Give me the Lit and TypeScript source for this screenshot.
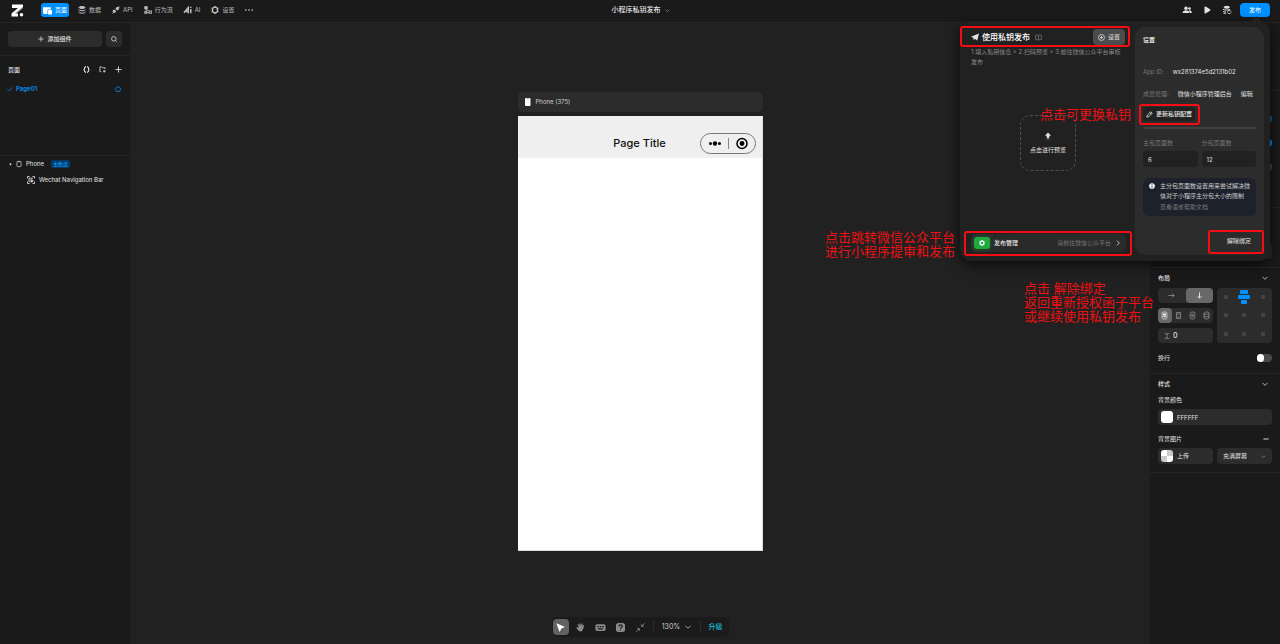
import { LitElement, html, svg, css, nothing } from "lit";
import { customElement, property } from "lit/decorators.js";
import { classMap } from "lit/directives/class-map.js";

/* Every icon is drawn on a 16 x 16 grid. */
const ICONS: Record<string, unknown> = {
  pages: svg`<path fill="currentColor" d="M0 2h14v4H8v8H2a2 2 0 0 1-2-2z"/><rect x="9" y="7" width="7" height="8" rx="1" fill="currentColor"/>`,
  data: svg`<g fill="none" stroke="currentColor" stroke-width="2"><ellipse cx="8" cy="3" rx="6" ry="2" fill="currentColor"/><path d="M1 7.500c1 2.600 13 2.600 14 0M1 12c1 3.200 13 3.200 14 0"/></g>`,
  api: svg`<path fill="currentColor" d="M8 3l6-2 1 1-2 6-3 1-3-3zM2 8l3-1 3 3-1 3-3 1-3-3z"/><path d="M5 11l-4 4" stroke="currentColor" stroke-width="2"/>`,
  flow: svg`<g fill="none" stroke="currentColor" stroke-width="1.800"><rect x="1.500" y="1.500" width="5" height="4" fill="currentColor"/><path d="M4 5v8.500h6M4 7l6 3"/><rect x="1.500" y="11.500" width="4" height="3"/><rect x="10.500" y="10" width="4.500" height="4.500"/></g>`,
  ai: svg`<path d="M0 13.500L8.500 3v11.500M4 11h5" fill="none" stroke="currentColor" stroke-width="3"/><path d="M13.500 6v8.500M13.500 1.500v2.500" stroke="currentColor" stroke-width="3"/>`,
  gear: svg`<path fill="none" stroke="currentColor" stroke-width="3" stroke-linejoin="round" d="M6 2.500h4l3 2.500v6L10 13.500H6L3 11V5z"/><path d="M8 0v3M8 13v3M1 4l2 1M13 11l2 1M1 12l2-1M13 5l2-1" stroke="currentColor" stroke-width="2"/>`,
  dots: svg`<g fill="currentColor"><circle cx="1.500" cy="8" r="1.700"/><circle cx="8" cy="8" r="1.700"/><circle cx="14.500" cy="8" r="1.700"/></g>`,
  plus: svg`<path d="M8 1v14M1 8h14" stroke="currentColor" stroke-width="2"/>`,
  minus: svg`<path d="M1 8h14" stroke="currentColor" stroke-width="2.500"/>`,
  search: svg`<g fill="none" stroke="currentColor" stroke-width="2"><circle cx="7.500" cy="7.500" r="6"/><path d="M12 12l3.500 3.500"/></g>`,
  braces: svg`<path fill="none" stroke="currentColor" stroke-width="2.400" d="M7 2H5.500L3.500 4v2.500L2 8l1.500 1.500V12l2 2H7M9 2h1.500l2 2v2.500L14 8l-1.500 1.500V12l-2 2H9"/>`,
  folder: svg`<path fill="none" stroke="currentColor" stroke-width="1.800" d="M5 13H2V2h4l2 2h6v3"/><path d="M12 9v6M9 12h6" stroke="currentColor" stroke-width="1.800"/>`,
  check: svg`<path fill="none" stroke="currentColor" stroke-width="2" d="M1 8l4.500 4.500L15 4"/>`,
  home: svg`<path fill="none" stroke="currentColor" stroke-width="2.200" stroke-linejoin="round" d="M8 1L1 6.500 3.500 14.500h9l2.500-8z"/>`,
  tri: svg`<path fill="currentColor" d="M1 3h14l-7 11z"/>`,
  device: svg`<g fill="none" stroke="currentColor" stroke-width="1.800"><rect x="2.500" y="1" width="11" height="14" rx="2"/><path d="M5.500 2h5"/></g>`,
  deviceFill: svg`<rect x="2" y="0" width="11" height="16" rx="2" fill="#fff"/><path d="M5.500 1.500h4" stroke="#777" stroke-width="1.500"/>`,
  component: svg`<g fill="none" stroke="currentColor" stroke-width="1.700"><path d="M1 5V1h4M11 1h4v4M15 11v4h-4M5 15H1v-4M4 4.500h8M4 4.500v7h3"/><path fill="currentColor" d="M7.500 7.500l5 2-2 1-1 2z"/></g>`,
  chev: svg`<path fill="none" stroke="currentColor" stroke-width="2" d="M1.500 5L8 11.500 14.500 5"/>`,
  chevR: svg`<path fill="none" stroke="currentColor" stroke-width="2" d="M5 1.500L11.500 8 5 14.500"/>`,
  users: svg`<g fill="currentColor"><circle cx="6" cy="4.500" r="3.400"/><path d="M-1 14C-1 6.500 13 6.500 13 14z"/><circle cx="13" cy="5" r="2.600"/><path d="M11.500 8.500c4-1 6 1.500 6 5.500h-3.500z"/></g>`,
  play: svg`<path fill="currentColor" d="M3 3q0-3 3-1.500l8 5q2 1.500 0 3l-8 5Q3 16 3 13z"/>`,
  sync: svg`<g fill="none" stroke="currentColor" stroke-width="2"><ellipse cx="7.500" cy="2.500" rx="5.500" ry="1.800" fill="currentColor"/><path d="M0 6.500c2 2.200 12 2.200 14 0M0 10.500c1 1.200 4 1.300 6 1.300M1 14.500h5"/><path stroke-width="1.900" d="M9 11c1-3 6-3 7 0M16 13c-1 3-6 3-7 0"/></g>`,
  plane: svg`<path fill="currentColor" d="M0 7.500L16 1l-3.500 14-5-3.500-2.500 3.500V10z"/>`,
  book: svg`<path fill="none" stroke="currentColor" stroke-width="1.700" d="M8 3v11M8 3.500C6 2 3 2 1.500 2.500V13c2-.5 5-.5 6.500 1 1.500-1.500 4.500-1.500 6.500-1V2.500C13 2 10 2 8 3.500z"/>`,
  target: svg`<g fill="none" stroke="currentColor" stroke-width="1.700"><circle cx="8" cy="8" r="6.800"/><path d="M8 4.500v7M4.500 8h7"/></g>`,
  upload: svg`<path fill="currentColor" d="M8 1l6 6.500h-3.500V12h-5V7.500H2z"/><path d="M5.500 14h5" stroke="currentColor" stroke-width="2" opacity=".6"/>`,
  hex: svg`<path fill="none" stroke="currentColor" stroke-width="3.500" stroke-linejoin="round" d="M8 2l5 3v6l-5 3-5-3V5z"/>`,
  pencil: svg`<path fill="none" stroke="currentColor" stroke-width="1.900" stroke-linejoin="round" d="M2 14l1-4.500L11 1.800l3.200 3.200L6.500 13zM9 4l3 3"/>`,
  info: svg`<circle cx="8" cy="8" r="7.500" fill="#fff"/><path d="M8 3v2.500M8 7v6" stroke="#1d212c" stroke-width="2.400"/>`,
  right: svg`<path fill="none" stroke="currentColor" stroke-width="1.700" d="M1 8h13M9.500 3.500L14 8l-4.500 4.500"/>`,
  down: svg`<path fill="none" stroke="currentColor" stroke-width="2" d="M8 1v13M3.500 9.500L8 14l4.500-4.500"/>`,
  packStart: svg`<g fill="none" stroke="currentColor" stroke-width="1.600"><rect x="2.500" y="0" width="11" height="16" rx="3"/><path fill="currentColor" d="M5.500 4h5v3h-5zM5.500 9h5v2h-5z"/></g>`,
  packEnds: svg`<g fill="none" stroke="currentColor" stroke-width="1.600"><path d="M3 4V1h10v3M3 12v3h10v-3"/><rect x="3.500" y="4.500" width="9" height="7"/></g>`,
  packMid: svg`<g fill="none" stroke="currentColor" stroke-width="1.600"><rect x="2.500" y="0" width="11" height="16" rx="4"/><path d="M5 5h6M5 8h6M5 11h6"/></g>`,
  packEven: svg`<g fill="none" stroke="currentColor" stroke-width="1.600"><rect x="2.500" y="0" width="11" height="16" rx="4"/><path d="M1 5h14M1 11h14"/></g>`,
  gap: svg`<path fill="none" stroke="currentColor" stroke-width="1.700" d="M1 1.500h14M1 14.500h14M8 3v10M5.500 5L8 3l2.500 2M5.500 11L8 13l2.500-2"/>`,
  cursor: svg`<path fill="currentColor" d="M1 1.500Q1 .5 2 1l13 5.500q.8.500 0 1L9.500 9.800 7 15q-.5.800-1 0z"/>`,
  hand: svg`<path fill="currentColor" d="M5 8L3 3q0-1.500 1.500-1L6 5.500 6 1q1-1.300 2 0l.5 4L10 1q1.200-.8 1.800.4L11.300 6 13.500 3.500q1.300-.3 1.300 1L12.500 10.500Q11.500 15 8 15 5 15 3 12L.5 8.500Q1 7 2.500 7.500z"/>`,
  keyboard: svg`<rect x="-1" y="2" width="18" height="12" rx="3" fill="currentColor"/><path d="M2 6.500h3M6.500 6.500h3M11 6.500h3M3.500 10.500h9" stroke="#1d1d1d" stroke-width="2"/>`,
  help: svg`<rect x="0" y="0" width="16" height="16" rx="4.500" fill="currentColor"/><path fill="none" stroke="#1d1d1d" stroke-width="2.300" d="M5 6c0-3.500 6-3.500 6 0 0 2-3 1.800-3 4M8 11.500v2"/>`,
  shrink: svg`<path fill="none" stroke="currentColor" stroke-width="1.500" d="M15.500.5L10 6M10 2v4h4M.5 15.500L6 10M2 10h4v4"/>`,
};

@customElement("ui-icon")
class UiIcon extends LitElement {
  static styles = css`
    :host { display: inline-flex; flex: none; width: 8px; height: 8px; }
    svg { width: 100%; height: 100%; display: block; overflow: visible; }
  `;
  @property() name = "";
  render() {
    return html`<svg viewBox="0 0 16 16" aria-hidden="true">${ICONS[this.name] ?? nothing}</svg>`;
  }
}

const NAV = [
  { icon: "pages", label: "页面", active: true },
  { icon: "data", label: "数据" },
  { icon: "api", label: "API" },
  { icon: "flow", label: "行为流" },
  { icon: "ai", label: "AI" },
  { icon: "gear", label: "设置" },
];

@customElement("app-root")
class AppRoot extends LitElement {
  static styles = css`
    :host {
      display: block;
      font: 6px/10px Inter, "Noto Sans CJK SC", sans-serif;
      color: #e4e4e4;
      background: #212121;
    }
    *, *::before { box-sizing: border-box; }
    button, input, select {
      font: inherit; color: inherit; border: 0; padding: 0; margin: 0;
      background: none; appearance: none; outline: none; min-width: 0;
    }
    button { display: flex; align-items: center; justify-content: center; gap: 3px; white-space: nowrap; }
    p, h1, h2, h3, ul { margin: 0; padding: 0; font: inherit; }
    a { color: inherit; text-decoration: none; }
    .app { position: relative; display: grid; grid-template-rows: 23px 1fr; min-height: 100vh; overflow: hidden; }

    .top {
      display: grid; grid-template-columns: 1fr auto 1fr; align-items: center;
      background: #1a1a1a; border-bottom: 1px solid #262626; padding: 0 10px 2px 11px;
    }
    .left { display: flex; align-items: center; gap: 17px; }
    .logo { width: 13px; height: 13px; }
    nav { display: flex; align-items: center; gap: 5px; }
    .tab { height: 14px; padding: 0 3px; border-radius: 3px; color: #bdbdbd; }
    .tab.active { background: #0091ff; color: #fff; padding: 0 2px; margin-right: 1px; }
    .tab.active ui-icon { width: 9px; height: 9px; }
    .project { font-size: 7px; font-weight: 500; gap: 4px; }
    .project ui-icon { width: 5px; height: 5px; color: #999; }
    .actions { display: flex; align-items: center; justify-content: flex-end; gap: 12px; }
    .publish { width: 30px; height: 14px; background: #0091ff; color: #fff; border-radius: 4px; margin-left: -3px; }

    .body { display: grid; grid-template-columns: 130px 1fr 130px; min-height: 0; }
    .side { background: #1a1a1a; }
    .tools { display: flex; gap: 4px; padding: 8px; border-bottom: 1px solid #262626; }
    .tools button { height: 16px; background: #2c2c2c; border-radius: 4px; font-weight: 500; }
    .tools .add { flex: 1; }
    .tools .find { width: 16px; }
    .tools ui-icon { width: 6px; height: 6px; }
    .pages { height: 100px; padding: 4px 8px; border-bottom: 1px solid #262626; }
    .row { display: flex; align-items: center; height: 19px; }
    .row .grow { flex: 1; }
    .head { gap: 9px; }
    .head ui-icon { width: 7px; height: 7px; }
    .head h2 { font-weight: 500; }
    .page { color: #0585e8; gap: 3px; font-weight: 700; padding-right: 1px; }
    .page ui-icon { width: 6px; height: 6px; margin-left: -1px; }
    .node { height: 16px; padding-left: 9px; gap: 4px; font-size: 6px; }
    .node ui-icon { width: 6px; height: 6px; }
    .node ui-icon.caret { width: 3px; height: 3px; }
    .node ui-icon.comp { width: 8px; height: 8px; }
    .node.child { padding-left: 27px; }
    .tag { background: #053a66; color: #079bff; border-radius: 2px; height: 8px; line-height: 8px; padding: 0 2px; font-size: 5px; font-weight: 500; margin-left: 3px; }

    .canvas { display: flex; flex-direction: column; align-items: center; padding: 69px 0 7px; }
    .device { width: 245px; display: flex; flex-direction: column; gap: 4px; }
    .label { height: 20px; display: flex; align-items: center; gap: 4px; padding: 0 6px; background: #2c2c2c; border-radius: 5px; color: #cfcfcf; }
    .screen { height: 435px; background: #fff; color: #111; border: solid #ddd; border-width: 0 1px 1px 0; }
    .navbar { height: 42px; background: #efefef; display: grid; grid-template-columns: 1fr auto 1fr; align-items: end; padding: 0 6px 4px; }
    .navbar h3 { font-size: 11px; line-height: 22px; font-weight: 500; }
    .capsule { justify-self: end; width: 56px; height: 21px; border: 1px solid #777; border-radius: 11px; display: flex; align-items: center; justify-content: center; }
    .capsule svg { width: 54px; height: 19px; }
    .dock { margin-top: auto; height: 20px; display: flex; align-items: center; background: #1b1b1b; border-radius: 5px; padding: 0 2px 0 1px; gap: 4px; color: #8b8b8b; }
    .dock button { width: 16px; height: 16px; border-radius: 4px; }
    .dock ui-icon { width: 9px; height: 9px; }
    .dock .on { background: #626262; color: #fff; }
    .dock .zoom { width: 38px; padding: 0 4px; border-radius: 0; color: #cfcfcf; font-size: 7px; gap: 5px; }
    .dock .zoom ui-icon { width: 6px; height: 6px; }
    .dock .up { width: 22px; color: #17b9d0; font-size: 7px; font-weight: 500; }
    .dock i { width: 1px; height: 12px; background: #2b2b2b; }

    .props { background: #1a1a1a; }
    .blank { border-bottom: 1px solid #262626; height: 68px; }
    .blank.mid { height: 117px; display: grid; gap: 16px; align-content: start; justify-items: end; padding: 24px 8px 0; }
    .blank.low { height: 60px; display: grid; align-content: end; padding: 0 8px 8px; }
    .group { padding: 0 8px; border-bottom: 1px solid #262626; }
    .group .row { height: 20px; justify-content: space-between; }
    .group .title { font-weight: 500; padding-right: 4px; }
    .title ui-icon { width: 6px; height: 6px; }
    .layout { display: grid; grid-template-columns: 1fr 1fr; gap: 4px; }
    .stack { display: grid; gap: 5px; }
    .seg { display: flex; height: 15px; background: #2c2c2c; border-radius: 4px; color: #9b9b9b; padding: 0; }
    .seg button { flex: 1; border-radius: 4px; }
    .seg ui-icon { width: 7px; height: 7px; }
    .seg .on { background: #686868; color: #eee; }
    .field { display: flex; align-items: center; gap: 4px; height: 16px; background: #2c2c2c; border-radius: 4px; padding: 0 3px; }
    .field input { flex: 1; width: 0; height: 100%; }
    .num { height: 15px; padding: 0 6px; gap: 3px; }
    .num input { font-size: 7px; font-weight: 500; }
    .num ui-icon { width: 6px; height: 6px; color: #8b8b8b; }
    .grid9 { background: #2c2c2c; border-radius: 4px; display: grid; grid-template: repeat(3, minmax(0, 1fr)) / repeat(3, 1fr); place-items: center; }
    .grid9 i { width: 4px; height: 4px; background: #444; border-radius: 1px; }
    .grid9 svg { width: 12px; height: 14px; }
    .group .wrap { height: 30px; }
    .switch { width: 15px; height: 8px; border-radius: 4px; background: #4a4a4a; justify-content: flex-start; }
    .switch::before { content: ""; width: 7px; height: 8px; border-radius: 4px; background: #fff; }
    .switch.lit { background: #0091ff; }
    .switch.faded { opacity: 0.6; }
    .swatch { width: 12px; height: 12px; border-radius: 3px; background: #fff; flex: none; }
    .checker { background: repeating-conic-gradient(#ccc 0 25%, #fff 0 50%); }
    .style { padding-bottom: 8px; }
    .sub ui-icon { width: 6px; height: 6px; margin-right: 3px; }
    .group .sub { height: 12px; margin-bottom: 3px; }
    .group .gapped { margin: 6px 0 1px; height: 16px; }
    .field.select { padding: 0 6px; gap: 0; }
    .select select { flex: 1; width: 0; }
    .select ui-icon { width: 5px; height: 5px; color: #999; }
    button.field { justify-content: flex-start; }

    /* publish pop-over, anchored beneath the publish button */
    .pop {
      position: absolute; top: 21px; right: 10px; width: 310px; height: 240px; z-index: 2;
      display: grid; grid-template-columns: 1fr 129px; padding: 6px 6px 6px 0;
      background: #212121; border-radius: 12px; box-shadow: 0 4px 14px #000a;
    }
    .pop::before { content: ""; position: absolute; right: 9px; top: -3px; width: 9px; height: 9px; background: #212121; transform: rotate(45deg); z-index: -1; }
    .main { display: flex; flex-direction: column; padding: 2px 10px 3px 11px; }
    .mhead { display: flex; align-items: center; height: 16px; gap: 3px; }
    .mhead h2 { font-size: 8px; font-weight: 500; color: #fff; }
    .mhead .bk { width: 7px; height: 7px; color: #777; margin-left: 2px; flex: none; }
    .mhead button { margin-left: auto; width: 32px; height: 16px; background: #4b4b4b; border-radius: 4px; }
    .mhead button ui-icon { width: 7px; height: 7px; }
    .steps { color: #8a8a8a; margin-top: 2px; line-height: 10px; }
    .preview { align-self: center; margin: 48px 0 0; flex-direction: column; gap: 5px; width: 56px; height: 56px; border: 1px dashed #505050; border-radius: 10px; }
    .manage { margin: auto -1px 0 0; display: flex; align-items: center; height: 18px; background: #2a2a2a; border-radius: 5px; padding: 0 5px 0 3px; font-weight: 500; gap: 4px; }
    .badge { width: 16px; height: 12px; border-radius: 3px; background: #20aa3e; display: grid; place-items: center; box-shadow: 0 0 6px #20aa3e66; }
    .badge ui-icon { width: 6px; height: 6px; color: #fff; }
    .manage .goto { margin-left: auto; color: #777; font-weight: 400; }
    .manage .go { width: 6px; height: 6px; }
    .setup { background: #2c2c2c; border-radius: 11px; padding: 8px; display: flex; flex-direction: column; }
    .setup h2 { font-weight: 600; }
    .pair { display: flex; height: 10px; gap: 9px; }
    .dim { color: #777; }
    .appid { margin-top: 22px; }
    .member { margin-top: 12px; }
    .key { align-self: flex-start; width: 52px; height: 14px; margin-top: 8px; background: #212121; border-radius: 4px; font-weight: 500; }
    .key ui-icon { width: 7px; height: 7px; }
    .setup hr { width: 100%; height: 2px; margin: 6px 0 9px; border: 0; background: #424242; border-radius: 1px; }
    .counts { display: grid; grid-template-columns: 1fr 1fr; gap: 4px; }
    .counts label { display: grid; gap: 3px; color: #777; }
    .counts input { height: 16px; width: 100%; background: #212121; border-radius: 4px; padding: 0 5px; color: #e4e4e4; }
    .note { display: grid; grid-template-columns: auto 1fr; gap: 5px; margin-top: 11px; padding: 3px 4px 4px 6px; background: #1d212c; border-radius: 6px; color: #cfcfcf; white-space: nowrap; }
    .note ui-icon { width: 6px; height: 6px; margin-top: 2px; }
    .note a { display: block; color: #777; margin-top: 1px; }
    .unbind { align-self: flex-end; margin: auto 5px 0 0; height: 12px; }

    /* review marks floating over the page */
    .mark { position: absolute; z-index: 3; border: 2px solid #f40d12; border-radius: 3px; pointer-events: none; }
    .m1 { top: 26px; right: 150px; width: 170px; height: 21px; }
    .m2 { top: 231px; right: 148px; width: 168px; height: 25px; }
    .m3 { top: 104px; right: 80px; width: 61px; height: 21px; }
    .m4 { top: 230px; right: 16px; width: 56px; height: 24px; }
    .memo { position: absolute; z-index: 3; color: #ed1014; font-size: 13px; line-height: 14px; pointer-events: none; }
    .n1 { top: 107px; right: 149px; }
    .n2 { top: 230px; right: 325px; }
    .n3 { top: 281px; right: 126px; }
  `;

  render() {
    return html`<div class="app">
      ${this.header()}
      <div class="body">${this.pagePanel()}${this.canvas()}${this.inspector()}</div>
      ${this.publishPopover()} ${this.marks()}
    </div>`;
  }

  private header() {
    return html`<header class="top">
      <div class="left">
        <svg class="logo" viewBox="0 0 26 26" aria-hidden="true">
          <path d="M2 1H24V7L10 19H14V25H1V19L14 8H2Z" fill="#fff" />
          <path d="M24 5v3L12 18l-5 2z" fill="#999" />
          <circle cx="21" cy="21.500" r="3.500" fill="#fff" />
        </svg>
        <nav>
          ${NAV.map(
            (n) => html`<button class=${classMap({ tab: true, active: !!n.active })}>
              <ui-icon name=${n.icon}></ui-icon>${n.label}
            </button>`
          )}
          <button class="tab" aria-label="更多"><ui-icon name="dots"></ui-icon></button>
        </nav>
      </div>
      <button class="project">小程序私钥发布<ui-icon name="chev"></ui-icon></button>
      <div class="actions">
        <button aria-label="成员"><ui-icon name="users"></ui-icon></button>
        <button aria-label="预览"><ui-icon name="play"></ui-icon></button>
        <button aria-label="同步"><ui-icon name="sync"></ui-icon></button>
        <button class="publish">发布</button>
      </div>
    </header>`;
  }

  private pagePanel() {
    return html`<aside class="side">
      <div class="tools">
        <button class="add"><ui-icon name="plus"></ui-icon>添加组件</button>
        <button class="find" aria-label="搜索"><ui-icon name="search"></ui-icon></button>
      </div>
      <section class="pages">
        <div class="row head">
          <h2 class="grow">页面</h2>
          <button aria-label="变量"><ui-icon name="braces"></ui-icon></button>
          <button aria-label="新建文件夹"><ui-icon name="folder"></ui-icon></button>
          <button aria-label="新建页面"><ui-icon name="plus"></ui-icon></button>
        </div>
        <div class="row page">
          <ui-icon name="check"></ui-icon><span class="grow">Page01</span><ui-icon name="home"></ui-icon>
        </div>
      </section>
      <div class="row node">
        <ui-icon class="caret" name="tri"></ui-icon><ui-icon name="device"></ui-icon>Phone<span class="tag">主断点</span>
      </div>
      <div class="row node child"><ui-icon class="comp" name="component"></ui-icon>Wechat Navigation Bar</div>
    </aside>`;
  }

  private canvas() {
    return html`<main class="canvas">
      <div class="device">
        <div class="label"><ui-icon name="deviceFill"></ui-icon>Phone (375)</div>
        <div class="screen">
          <div class="navbar">
            <span></span>
            <h3>Page Title</h3>
            <div class="capsule">
              <svg viewBox="0 0 54 19" aria-hidden="true">
                <circle cx="9.500" cy="9.500" r="1.500" /><circle cx="14" cy="9.500" r="2.200" /><circle cx="18.500" cy="9.500" r="1.500" />
                <path d="M27.500 4v11" stroke="#888" />
                <circle cx="41" cy="9.500" r="5" fill="none" stroke="#000" stroke-width="1.500" /><circle cx="41" cy="9.500" r="2.400" />
              </svg>
            </div>
          </div>
        </div>
      </div>
      <div class="dock">
        <button class="on" aria-label="选择"><ui-icon name="cursor"></ui-icon></button>
        <button aria-label="拖动"><ui-icon name="hand"></ui-icon></button>
        <button aria-label="快捷键"><ui-icon name="keyboard"></ui-icon></button>
        <button aria-label="帮助"><ui-icon name="help"></ui-icon></button>
        <button aria-label="收起"><ui-icon name="shrink"></ui-icon></button>
        <i></i>
        <button class="zoom">130%<ui-icon name="chev"></ui-icon></button>
        <i></i>
        <button class="up">升级</button>
      </div>
    </main>`;
  }

  private inspector() {
    return html`<aside class="props">
      <div class="blank"></div>
      <div class="blank mid">
        <button class="switch lit faded" role="switch" aria-checked="true" aria-label="显示"></button>
        <button class="switch lit" role="switch" aria-checked="true" aria-label="启用"></button>
        <button class="switch" role="switch" aria-checked="false" aria-label="固定"></button>
      </div>
      <div class="blank low"><span class="field"></span></div>
      <section class="group">
        <div class="row title">布局<ui-icon name="chev"></ui-icon></div>
        <div class="layout">
          <div class="stack">
            <div class="seg">
              <button aria-label="横向"><ui-icon name="right"></ui-icon></button>
              <button class="on" aria-label="纵向"><ui-icon name="down"></ui-icon></button>
            </div>
            <div class="seg">
              ${["packStart", "packEnds", "packMid", "packEven"].map(
                (n, i) => html`<button class=${classMap({ on: i === 0 })} aria-label="分布"><ui-icon name=${n}></ui-icon></button>`
              )}
            </div>
            <label class="field num"><ui-icon name="gap"></ui-icon><input aria-label="间距" value="0" /></label>
          </div>
          <div class="grid9">
            <i></i>
            <svg viewBox="0 0 12 14" fill="#0091ff" aria-hidden="true">
              <rect x="2" width="8" height="4" rx="1" /><rect y="5" width="12" height="4" rx="1" /><rect x="3" y="10" width="6" height="4" rx="1" />
            </svg>
            ${Array.from({ length: 7 }, () => html`<i></i>`)}
          </div>
        </div>
        <div class="row wrap">换行<button class="switch" role="switch" aria-checked="false" aria-label="换行"></button></div>
      </section>
      <section class="group style">
        <div class="row title">样式<ui-icon name="chev"></ui-icon></div>
        <div class="row sub">背景颜色</div>
        <label class="field"><span class="swatch"></span><input aria-label="背景颜色" value="FFFFFF" /></label>
        <div class="row sub gapped">背景图片<ui-icon name="minus"></ui-icon></div>
        <div class="layout">
          <button class="field"><span class="swatch checker"></span>上传</button>
          <label class="field select">
            <select aria-label="填充方式"><option>充满屏幕</option></select><ui-icon name="chev"></ui-icon>
          </label>
        </div>
      </section>
    </aside>`;
  }

  private publishPopover() {
    return html`<section class="pop">
      <div class="main">
        <div class="mhead">
          <ui-icon name="plane"></ui-icon>
          <h2>使用私钥发布</h2>
          <ui-icon class="bk" name="book"></ui-icon>
          <button><ui-icon name="target"></ui-icon>设置</button>
        </div>
        <p class="steps">1.填入私钥信息 &gt; 2.扫码预览 &gt; 3.前往微信公众平台审核发布</p>
        <button class="preview"><ui-icon name="upload"></ui-icon>点击进行预览</button>
        <a class="manage" href="#">
          <span class="badge"><ui-icon name="hex"></ui-icon></span>发布管理<span class="goto">请前往微信公众平台</span>
          <ui-icon class="go" name="chevR"></ui-icon>
        </a>
      </div>
      <div class="setup">
        <h2>设置</h2>
        <div class="pair appid"><span class="dim">App ID:</span><span>wx281374e5d2131b02</span></div>
        <div class="pair member"><span class="dim">成员管理:</span><a href="#">微信小程序管理后台</a><a href="#">编辑</a></div>
        <button class="key"><ui-icon name="pencil"></ui-icon>更新私钥配置</button>
        <hr />
        <div class="counts">
          <label>主包页面数<input value="6" /></label>
          <label>分包页面数<input value="12" /></label>
        </div>
        <div class="note">
          <ui-icon name="info"></ui-icon>
          <div>主分包页面数设置用来尝试解决微<br />信对于小程序主分包大小的限制<a href="#">查看语雀帮助文档</a></div>
        </div>
        <button class="unbind">解除绑定</button>
      </div>
    </section>`;
  }

  private marks() {
    return html`
      <div class="mark m1"></div><div class="mark m2"></div><div class="mark m3"></div><div class="mark m4"></div>
      <p class="memo n1">点击可更换私钥</p>
      <p class="memo n2">点击跳转微信公众平台<br />进行小程序提审和发布</p>
      <p class="memo n3">点击 解除绑定<br />返回重新授权函子平台<br />或继续使用私钥发布</p>
    `;
  }
}
